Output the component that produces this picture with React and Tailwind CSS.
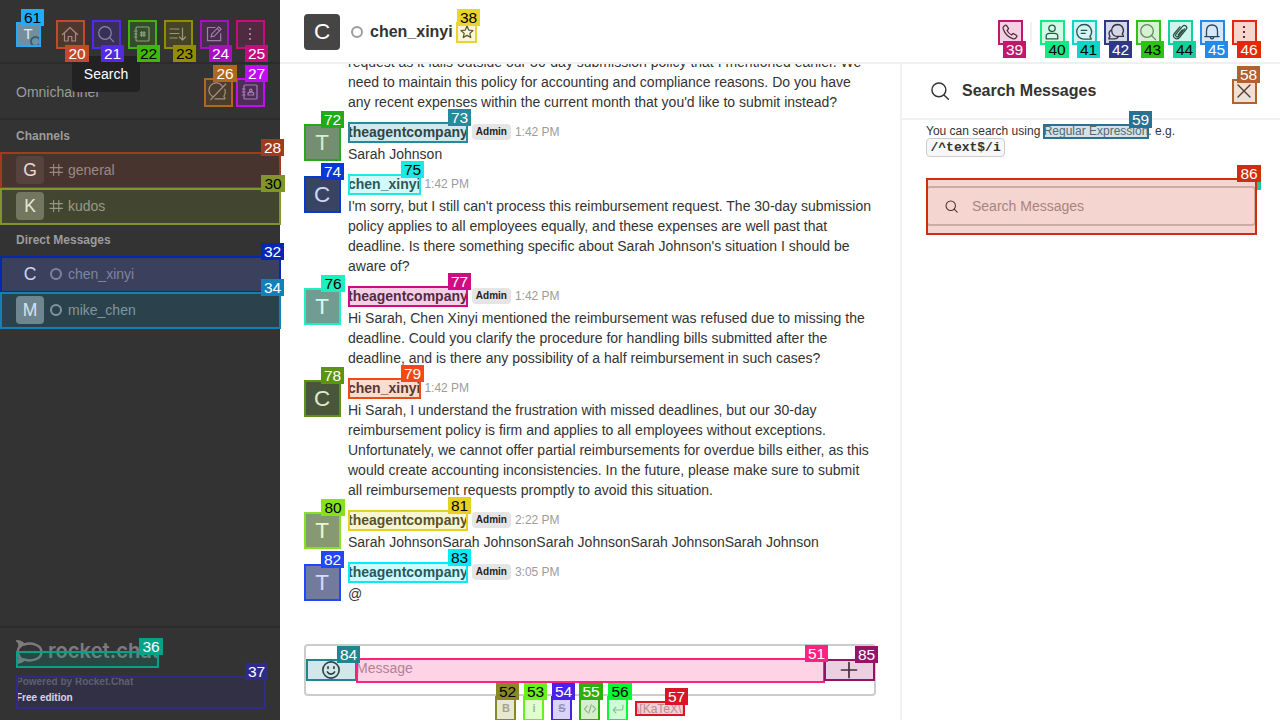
import React from "react";

/* Annotation boxes: number, colour, box x/y/w/h, label x/y/w, dark label text */
const MARKS = [
  [61, "#22aaff", 16, 22, 25, 25, 21, 9, 23, 1],
  [20, "#c24a2a", 56, 20, 29, 29, 65, 45, 24, 0],
  [21, "#552ae6", 92, 20, 29, 29, 101, 45, 23, 0],
  [22, "#41b60a", 128, 20, 29, 29, 137, 45, 23, 1],
  [23, "#928e00", 164, 20, 29, 29, 173, 45, 23, 1],
  [24, "#a70fc0", 200, 20, 29, 29, 209, 45, 23, 0],
  [25, "#c20f7c", 236, 20, 29, 29, 245, 45, 23, 0],
  [26, "#b1671c", 204, 78, 29, 29, 213, 65, 24, 0],
  [27, "#c010f2", 236, 78, 29, 29, 245, 65, 23, 0],
  [28, "#a03a22", 0, 152, 281, 37, 261, 139, 23, 0],
  [30, "#82952a", 0, 188, 281, 37, 261, 175, 24, 1],
  [32, "#0a24b4", 0, 256, 281, 37, 261, 243, 23, 0],
  [34, "#1082b6", 0, 292, 281, 37, 261, 279, 23, 0],
  [36, "#04a288", 16, 651, 143, 17, 139, 638, 24, 0],
  [37, "#302a8c", 16, 676, 250, 33, 245, 663, 23, 0],
  [38, "#e9d52e", 456, 22, 21, 21, 457, 9, 23, 1],
  [39, "#c2186c", 998, 20, 25, 25, 1003, 41, 23, 0],
  [40, "#12ea86", 1040, 20, 25, 25, 1045, 41, 24, 1],
  [41, "#12d4c4", 1072, 20, 25, 25, 1077, 41, 23, 1],
  [42, "#2f3886", 1104, 20, 25, 25, 1109, 41, 23, 0],
  [43, "#2cc412", 1136, 20, 25, 25, 1141, 41, 23, 1],
  [44, "#14d09c", 1168, 20, 25, 25, 1173, 41, 23, 1],
  [45, "#228ae8", 1200, 20, 25, 25, 1205, 41, 23, 0],
  [46, "#e6280a", 1232, 20, 25, 25, 1237, 41, 24, 0],
  [58, "#b2622e", 1232, 79, 25, 25, 1237, 66, 23, 0],
  [59, "#2a7294", 1043, 124, 106, 15, 1129, 111, 23, 0],
  [86, "#ce2e10", 926, 178, 331, 57, 1237, 165, 24, 0],
  [72, "#22aa18", 304, 124, 37, 37, 321, 111, 23, 0],
  [73, "#228c9a", 348, 122, 120, 21, 448, 109, 23, 0],
  [74, "#0638d4", 304, 176, 37, 37, 321, 163, 23, 0],
  [75, "#1ee8e4", 348, 174, 73, 21, 401, 161, 23, 1],
  [76, "#1cf0be", 304, 288, 37, 37, 321, 275, 24, 1],
  [77, "#d00c84", 348, 286, 120, 21, 448, 273, 23, 0],
  [78, "#5c9412", 304, 380, 37, 37, 321, 367, 23, 0],
  [79, "#f04a16", 348, 378, 73, 21, 401, 365, 23, 0],
  [80, "#88e01e", 304, 512, 37, 37, 321, 499, 24, 1],
  [81, "#e6d020", 348, 510, 120, 21, 448, 497, 23, 1],
  [82, "#2048fa", 304, 564, 37, 37, 321, 551, 23, 0],
  [83, "#04ecfc", 348, 562, 120, 21, 448, 549, 23, 1],
  [84, "#228490", 306, 659, 51, 22, 337, 646, 23, 0],
  [51, "#fa2480", 356, 658, 469, 25, 805, 645, 23, 0],
  [85, "#961468", 824, 659, 51, 22, 855, 646, 23, 0],
  [52, "#8a8826", 495, 696, 21, 25, 496, 683, 23, 1],
  [53, "#66f01c", 523, 696, 21, 25, 524, 683, 23, 1],
  [54, "#4622ea", 551, 696, 21, 25, 552, 683, 23, 0],
  [55, "#2eb00c", 579, 696, 21, 25, 579, 683, 24, 0],
  [56, "#04fa30", 607, 696, 21, 25, 608, 683, 24, 1],
  [57, "#dc1428", 635, 701, 50, 15, 665, 688, 23, 0],
];

function Marks() {
  return (
    <div className="pointer-events-none absolute inset-0 overflow-hidden">
      <div className="absolute top-[173px] left-[1257px] h-[17px] w-1 bg-[#20c6a0]" />
      {MARKS.map(([n, c, x, y, w, h]) => (
        <div key={n} className="absolute border-2" style={{ left: x, top: y, width: w, height: h, borderColor: c, backgroundColor: c + "33" }} />
      ))}
      {MARKS.map(([n, c, , , , , lx, ly, lw, dark]) => (
        <div
          key={n}
          className={`absolute flex h-[17px] items-center justify-center pb-px text-[15.5px] leading-[15px] ${dark ? "text-black" : "text-white"}`}
          style={{ left: lx, top: ly, width: lw, backgroundColor: c }}
        >
          {n}
        </div>
      ))}
    </div>
  );
}

const PATHS = {
  home: <path d="M2.5 10.5 10 3.5l7.5 7M4.500 9v8h3.700v-4.500h3.600V17h3.700V9" />,
  search: <><circle cx="9" cy="9" r="6.3" /><path d="m13.6 13.6 4 4" /></>,
  directory: <><rect x="4" y="3" width="13" height="14" rx="1" /><path d="M2.3 7H5M2.3 10H5M2.3 13H5M9.6 7.500v5M12 7.500v5M8.300 8.800h5M8.300 11.200h5" /></>,
  sort: <path d="M2 5h9M2 9.500h9M2 14h7M14.500 4v12M11.500 13l3 3 3-3" />,
  edit: <path d="M11 3.500H3.500v13.200h13.200V9.500M7 13l.8-3.200 7-7 2.400 2.400-7 7zM13.200 4.400l2.400 2.400" />,
  kebab: <g fill="currentColor" stroke="none"><rect x="9" y="4" width="2" height="2" /><rect x="9" y="9" width="2" height="2" /><rect x="9" y="14" width="2" height="2" /></g>,
  bubbleOff: <path d="M14.500 4.500A7.300 7.300 0 1 0 4.200 14.300M7 16.800h10c-.1-1.200-.5-1.800-1.200-2.500a7.300 7.300 0 0 0 1-7M17.800 2 2.800 17.500" />,
  contacts: <><rect x="4" y="3" width="13" height="14" rx="1" /><path d="M2.300 7H5M2.300 10H5M2.300 13H5M8 13v-1.500c0-.7 1-1.300 2.800-1.300s2.800.6 2.800 1.300V13z" /><circle cx="10.800" cy="8.400" r="1.300" /></>,
  hash: <path d="M7 3v14M13.500 3v14M2.500 7h15.500M2.500 13h15.500" />,
  star: <path d="m10 2.600 2.200 5 5.300.5-4 3.600 1.200 5.300L10 14.200 5.300 17l1.200-5.300-4-3.600 5.300-.5z" />,
  phone: <path d="M3 3.800 4.800 2.500c.5-.3 1-.2 1.300.2l2 3c.3.500.2.900-.1 1.200L6.700 8.200c.8 2 3 4.200 5.100 5.100l1.300-1.300c.3-.3.800-.4 1.200-.1l3 2c.4.300.5.800.2 1.300L16.200 17c-.8.800-2 .800-3.200.4C8.500 15.800 4.200 11.500 2.600 7c-.4-1.200-.4-2.400.4-3.200z" />,
  user: <><circle cx="10" cy="6.300" r="3.200" /><path d="M4.200 16.800v-2.500c0-2 1.600-3 3.300-3h5c1.700 0 3.300 1 3.300 3v2.500z" /></>,
  threads: <path d="M10 2.500a7.300 7.300 0 1 0 0 14.600h7.300c-.2-1.100-.7-1.900-1.500-2.600A7.300 7.300 0 0 0 10 2.500zM7.200 8.300h5.600M7.200 11.300h4" />,
  discussion: <path d="M11.500 2.500a6 6 0 0 0-5.300 8.700c1 2 3 3.200 5.300 3.200h6c-.2-1.200-.6-1.700-1.300-2.300a6 6 0 0 0-4.700-9.600zM4.500 8.500c-1.600 1.700-1.800 4-.4 6-.7.600-1.200 1.200-1.300 2.300h5.500c2 0 3.300-.7 4.200-2.200" />,
  clip: <path d="m14.500 7-6 7.200c-1.500 1.700-3.900-.2-2.500-2l6.500-7.800c2.200-2.500 5.600.3 3.600 2.900l-6.700 8.200c-3 3.300-7.700-.4-5-4l5.500-6.700M12.300 8l-4.200 5" />,
  bell: <path d="M4.500 14.500V9c0-3.700 2-6 5.500-6s5.500 2.300 5.500 6v5.500M2.800 14.600h14.400M8.300 14.800c0 2.700 3.400 2.700 3.400 0" />,
  close: <path d="m4 4 12 12M16 4 4 16" />,
  smile: <><circle cx="10" cy="10" r="7.400" /><path d="M6.700 11.800c1.300 2.600 5.300 2.600 6.600 0M7.300 7v1.600M12.700 7v1.600" /></>,
  plus: <path d="M10 2.500v15M2.500 10h15" />,
  code: <path d="m6 5.500-4 4.500 4 4.500M14 5.500l4 4.500-4 4.500M11.700 4 8.300 16" />,
  enter: <path d="M17 4.500V9c0 1.500-.7 2.500-2.500 2.500H3M7 7.500l-4 4 4 4" />,
};

function Icon({ name, size = 20, sw = 1.2, className = "" }) {
  return (
    <svg width={size} height={size} viewBox="0 0 20 20" fill="none" stroke="currentColor" strokeWidth={sw} strokeLinejoin="round" strokeLinecap="round" className={`shrink-0 ${className}`}>
      {PATHS[name]}
    </svg>
  );
}

function SideIcon({ name }) {
  return <div className="flex h-7 w-7 shrink-0 items-center justify-center text-[#9c9c9c]"><Icon name={name} /></div>;
}

function Row({ letter, avatar, name, channel, active }) {
  return (
    <div className={`flex h-9 items-center px-4 ${active ? "bg-[#484848]" : ""}`}>
      <div className={`flex h-7 w-7 items-center justify-center rounded text-[17.5px] text-white ${avatar}`}>{letter}</div>
      <div className="ml-1 flex w-4 justify-center text-[#9c9c9c]">
        {channel ? <Icon name="hash" size={16} sw={1.4} /> : <span className="h-3 w-3 rounded-full border-2 border-[#9c9c9c]" />}
      </div>
      <span className="ml-1 text-sm text-[#9c9c9c]">{name}</span>
    </div>
  );
}

function Sidebar() {
  return (
    <aside className="flex w-[280px] shrink-0 flex-col bg-[#333333]">
      <div className="flex h-16 shrink-0 items-center border-b-2 border-[#2b2b2b] pt-1.5 pr-4 pl-4">
        <div className="relative mr-4 flex h-6 w-6 items-center justify-center rounded bg-[#878787] text-[15px] text-white">
          T
          <span className="absolute top-[14px] left-[14px] h-[11px] w-[11px] rounded-full border-2 border-[#484848] bg-[#8a8a8a]" />
        </div>
        <div className="flex gap-2">
          {["home", "search", "directory", "sort", "edit", "kebab"].map((n) => <SideIcon key={n} name={n} />)}
        </div>
      </div>
      <div className="flex h-14 shrink-0 items-center border-b-2 border-[#2b2b2b] px-4 pt-0.5">
        <span className="flex-1 text-sm text-[#9c9c9c]">Omnichannel</span>
        <div className="flex gap-1"><SideIcon name="bubbleOff" /><SideIcon name="contacts" /></div>
      </div>
      <div className="flex h-8 items-center px-4 text-xs font-bold text-[#9c9c9c]">Channels</div>
      <Row letter="G" avatar="bg-[#454545]" name="general" channel />
      <Row letter="K" avatar="bg-[#707070]" name="kudos" channel />
      <div className="flex h-8 items-center px-4 text-xs font-bold text-[#9c9c9c]">Direct Messages</div>
      <Row letter="C" avatar="bg-[#484848]" name="chen_xinyi" active />
      <Row letter="M" avatar="bg-[#878787]" name="mike_chen" />
      <div className="mt-auto h-[94px] shrink-0 border-t-2 border-[#2b2b2b] px-4 pt-2.5">
        <svg width="145" height="28" viewBox="0 0 145 28" className="block text-[#7c7c7c]">
          <path d="M2 3.500c2.500.2 4.500 1.200 6 3.200C15 4 25.500 6.500 25.500 14S15 24 8 21.300c-1.500 2.200-3.500 3-6 3.200 1.500-2 2-4 1.200-6.500-1.800-2.500-1.800-6 0-9C3.800 7 3.500 5 2 3.500z" fill="none" stroke="currentColor" strokeWidth="2.400" />
          <path d="M0 2.500c3.500-.3 6.500 1 8.500 3.800L3.500 11C4 7.500 2.500 4.500 0 2.500zM0 25.500c3.500.3 6.500-.5 8.500-3.500L3.500 17.500c.5 3.500-.5 6-3.500 8z" fill="currentColor" />
          <g fill="currentColor"><circle cx="8.500" cy="14" r="1.300" /><circle cx="13.500" cy="14" r="1.300" /><circle cx="18.500" cy="14" r="1.300" /></g>
          <text x="32" y="20" textLength="111" lengthAdjust="spacingAndGlyphs" fontFamily="Inter" fontWeight="600" fontSize="20.5" fill="currentColor">rocket.chat</text>
        </svg>
        <div className="mt-2 text-[10px] leading-4 font-bold text-[#6c6c6c]">Powered by Rocket.Chat</div>
        <div className="text-[10px] leading-4 font-bold text-white">Free edition</div>
      </div>
    </aside>
  );
}

const ADMIN = "theagentcompany";
const MESSAGES = [
  { lines: ["request as it falls outside our 30-day submission policy that I mentioned earlier. We", "need to maintain this policy for accounting and compliance reasons. Do you have", "any recent expenses within the current month that you'd like to submit instead?"] },
  { who: ADMIN, time: "1:42 PM", lines: ["Sarah Johnson"] },
  { who: "chen_xinyi", time: "1:42 PM", lines: ["I'm sorry, but I still can't process this reimbursement request. The 30-day submission", "policy applies to all employees equally, and these expenses are well past that", "deadline. Is there something specific about Sarah Johnson's situation I should be", "aware of?"] },
  { who: ADMIN, time: "1:42 PM", lines: ["Hi Sarah, Chen Xinyi mentioned the reimbursement was refused due to missing the", "deadline. Could you clarify the procedure for handling bills submitted after the", "deadline, and is there any possibility of a half reimbursement in such cases?"] },
  { who: "chen_xinyi", time: "1:42 PM", lines: ["Hi Sarah, I understand the frustration with missed deadlines, but our 30-day", "reimbursement policy is firm and applies to all employees without exceptions.", "Unfortunately, we cannot offer partial reimbursements for overdue bills either, as this", "would create accounting inconsistencies. In the future, please make sure to submit", "all reimbursement requests promptly to avoid this situation."] },
  { who: ADMIN, time: "2:22 PM", lines: ["Sarah JohnsonSarah JohnsonSarah JohnsonSarah JohnsonSarah Johnson"] },
  { who: ADMIN, time: "3:05 PM", lines: ["@"] },
];

function Message({ m }) {
  const admin = m.who === ADMIN;
  return (
    <div className="flex shrink-0 gap-2">
      {m.who ? (
        <div className={`mt-[3px] flex h-9 w-9 shrink-0 items-center justify-center rounded text-[22.5px] text-white ${admin ? "bg-[#878787]" : "bg-[#474747]"}`}>{admin ? "T" : "C"}</div>
      ) : (
        <div className="w-9 shrink-0" />
      )}
      <div>
        {m.who && (
          <div className="mb-0.5 flex h-5 items-center gap-1">
            <span className="text-sm font-bold">{m.who}</span>
            {admin && <span className="h-4 rounded-sm bg-[#e5e5e5] px-1 text-[10px] leading-4 font-bold text-[#222]">Admin</span>}
            <span className="text-xs text-[#9c9c9c]">{m.time}</span>
          </div>
        )}
        <div className="text-sm leading-5">
          {m.lines.map((l) => <div key={l} className="whitespace-nowrap">{l}</div>)}
        </div>
      </div>
    </div>
  );
}

function Tool({ children }) {
  return <div className="flex w-5 items-center justify-center text-[11px]">{children}</div>;
}

function Room() {
  return (
    <main className="flex w-[620px] shrink-0 flex-col text-[#333333]">
      <div className="flex min-h-0 flex-1 flex-col justify-end gap-2.5 overflow-hidden px-6 pb-10">
        {MESSAGES.map((m, i) => <Message key={i} m={m} />)}
      </div>
      <div className="mx-6 flex h-[52px] shrink-0 rounded border-2 border-[#cccccc]">
        <div className="flex w-[50px] items-center justify-center"><Icon name="smile" size={22} sw={1.500} /></div>
        <div className="flex-1 pt-3 text-sm leading-5 text-[#9c9c9c]">Message</div>
        <div className="flex w-[50px] items-center justify-center"><Icon name="plus" size={20} sw={1.700} /></div>
      </div>
      <div className="flex h-6 shrink-0 items-center gap-2 pt-px pl-[216px] text-xs text-[#acacac]">
        <Tool><b>B</b></Tool>
        <Tool><b>i</b></Tool>
        <Tool><b className="line-through">S</b></Tool>
        <Tool><Icon name="code" size={14} sw={1.600} /></Tool>
        <Tool><Icon name="enter" size={14} sw={1.600} /></Tool>
        <span>\[KaTeX\]</span>
      </div>
    </main>
  );
}

function SearchPanel() {
  return (
    <section className="flex flex-1 flex-col border-l-2 border-[#f0f0f0] text-[#333333]">
      <div className="flex h-14 shrink-0 items-center border-b-2 border-[#f0f0f0] px-6">
        <div className="flex w-7 justify-center"><Icon name="search" size={22} sw={1.300} className="-mt-px -ml-px" /></div>
        <h2 className="ml-2 flex-1 text-base font-bold">Search Messages</h2>
        <div className="flex h-6 w-6 items-center justify-center"><Icon name="close" size={20} sw={1.400} /></div>
      </div>
      <div className="px-6 pt-[3px] text-xs leading-4">
        <div>You can search using <span className="text-[#666]">Regular Expression</span>. e.g.</div>
        <code className="-mt-px inline-block h-[19px] rounded border border-[#cccccc] bg-[#f7f7f7] px-[3.5px] align-top font-['Liberation_Mono',monospace] text-[13px] leading-[17px] font-bold">/^text$/i</code>
      </div>
      <div className="mx-6 mt-[29px] flex h-10 w-[330px] items-center rounded border-2 border-[#cccccc] pl-4">
        <Icon name="search" size={15} sw={1.400} />
        <span className="ml-[13px] text-sm text-[#9c9c9c]">Search Messages</span>
      </div>
    </section>
  );
}

function RoomHeader() {
  return (
    <header className="flex h-16 shrink-0 items-center border-b-2 border-[#f0f0f0] px-6 pt-px text-[#333333]">
      <div className="flex h-9 w-9 items-center justify-center rounded bg-[#454545] text-[22.5px] text-white">C</div>
      <span className="ml-[11px] h-3 w-3 rounded-full border-2 border-[#9c9c9c]" />
      <span className="ml-[7px] text-base font-bold">chen_xinyi</span>
      <Icon name="star" size={16} sw={1.500} className="ml-1.5" />
      <div className="ml-auto flex items-center gap-2">
        <div className="flex h-6 w-6 items-center justify-center"><Icon name="phone" size={18} sw={1.400} /></div>
        <span className="h-5 w-0.5 bg-[#f0f0f0]" />
        {["user", "threads", "discussion", "search", "clip", "bell", "kebab"].map((n) => (
          <div key={n} className={`flex h-6 w-6 items-center justify-center ${n === "search" ? "text-[#777]" : ""}`}><Icon name={n} size={20} sw={1.300} /></div>
        ))}
      </div>
    </header>
  );
}

export default function App() {
  return (
    <div className="relative flex h-[720px] w-[1280px] overflow-hidden bg-white font-['Liberation_Sans',Arial,sans-serif]">
      <Sidebar />
      <div className="flex min-w-0 flex-1 flex-col">
        <RoomHeader />
        <div className="flex min-h-0 flex-1">
          <Room />
          <SearchPanel />
        </div>
      </div>
      <div className="absolute top-14 left-[72px] flex h-9 w-[68px] items-center justify-center rounded bg-[#222222] text-sm text-white">Search</div>
      <Marks />
    </div>
  );
}
